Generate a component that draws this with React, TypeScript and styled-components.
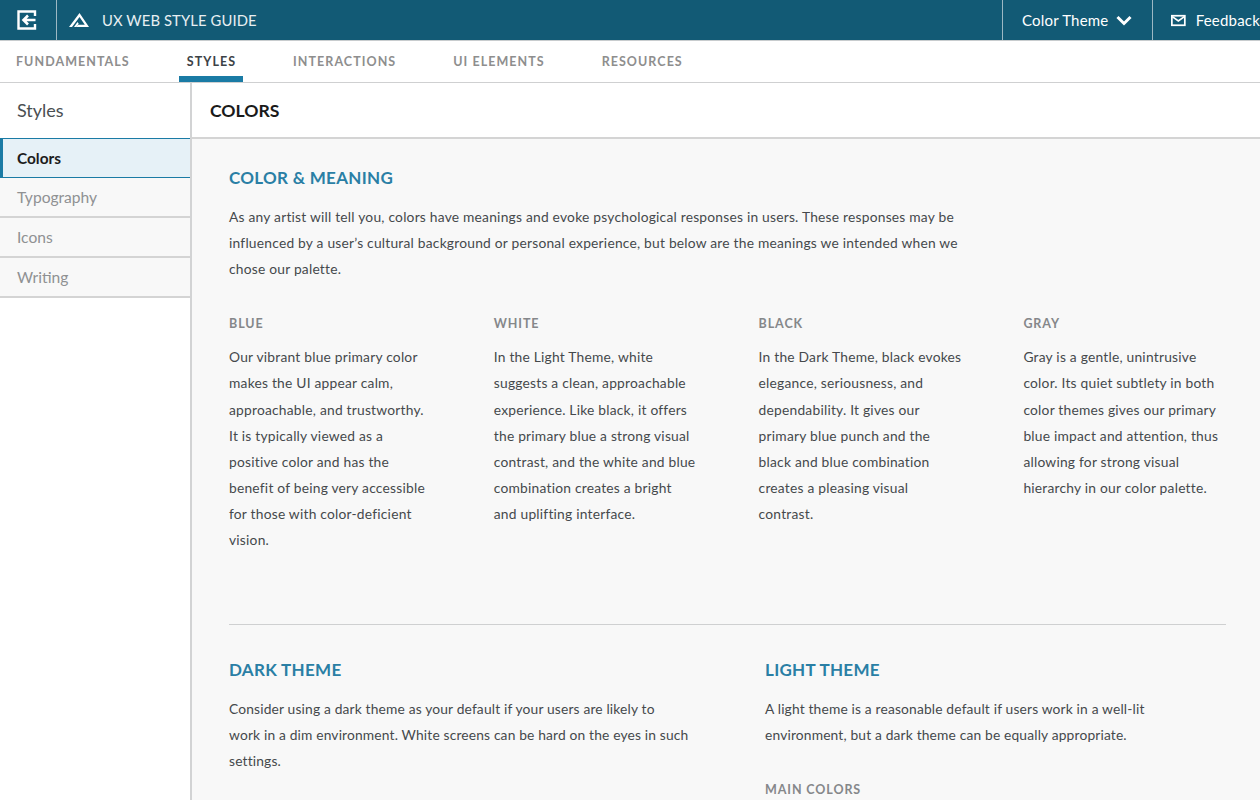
import React, { FC } from 'react';
import styled, { createGlobalStyle } from 'styled-components';

const GlobalStyle = createGlobalStyle`
  html, body {
    margin: 0;
    height: 100%;
    overflow: hidden;
    background: #fff;
    font-family: 'Lato', 'Open Sans', sans-serif;
  }
  * { box-sizing: border-box; }
`;

const Page = styled.div`
  width: 1260px;
  height: 800px;
  overflow: hidden;
  display: flex;
  flex-direction: column;
`;

const TopBar = styled.header`
  flex: none;
  height: 41px;
  display: flex;
  background: #125a75;
  color: #fff;
  border-bottom: 1px solid #c8ccce;
`;

const BackButton = styled.div`
  width: 57px;
  display: flex;
  align-items: center;
  justify-content: center;
  padding-right: 2px;
  border-right: 1px solid #9db8c4;
`;

const Brand = styled.div`
  flex: 1;
  display: flex;
  align-items: center;
  gap: 13px;
  padding-left: 12px;
  font-size: 14.8px;
  letter-spacing: 0.1px;
  color: #e8eff2;
`;

const BarAction = styled.div<{ $width: number; $gap: number; $pad: number }>`
  flex: none;
  width: ${p => p.$width}px;
  display: flex;
  align-items: center;
  gap: ${p => p.$gap}px;
  padding-left: ${p => p.$pad}px;
  border-left: 1px solid #9db8c4;
  font-size: 15px;
  letter-spacing: 0.2px;
  white-space: nowrap;
  overflow: hidden;
`;

const Tabs = styled.nav`
  flex: none;
  height: 42px;
  display: flex;
  gap: 57px;
  padding-left: 16px;
  border-bottom: 1px solid #cfd0d1;
`;

const Tab = styled.div<{ $active?: boolean }>`
  position: relative;
  height: 41px;
  display: flex;
  align-items: center;
  padding-bottom: 1px;
  font-size: 12.5px;
  font-weight: 700;
  letter-spacing: 1.05px;
  color: ${p => (p.$active ? '#3c4246' : '#8e8e8e')};

  ${p =>
    p.$active &&
    `
    &::after {
      content: '';
      position: absolute;
      left: -8px;
      right: -7px;
      bottom: 0;
      height: 6px;
      background: #1a7ba5;
    }
  `}
`;

const Body = styled.div`
  flex: 1;
  min-height: 0;
  display: flex;
`;

const Sidebar = styled.aside`
  flex: none;
  width: 192px;
  border-right: 2px solid #d2d3d4;
`;

const SidebarTitle = styled.div`
  height: 55px;
  display: flex;
  align-items: center;
  padding: 0 0 2px 17px;
  font-size: 18px;
  color: #4a4f52;
`;

const SideItem = styled.div<{ $active?: boolean }>`
  height: 40px;
  display: flex;
  align-items: center;
  padding-left: ${p => (p.$active ? '14px' : '17px')};
  padding-bottom: 1px;
  font-size: ${p => (p.$active ? '15.4px' : '15.6px')};
  background: ${p => (p.$active ? '#e6f1f7' : '#f8f8f8')};
  color: ${p => (p.$active ? '#1c1c1c' : '#8f9193')};
  font-weight: ${p => (p.$active ? 700 : 400)};
  border-bottom: ${p => (p.$active ? '1px solid #1a7ba5' : '2px solid #d4d4d4')};
  ${p => p.$active && 'border-left: 3px solid #1a7ba5; border-top: 1px solid #1a7ba5;'}
`;

const Main = styled.main`
  flex: 1;
  min-width: 0;
  display: flex;
  flex-direction: column;
`;

const PageTitle = styled.h1`
  flex: none;
  height: 56px;
  margin: 0;
  display: flex;
  align-items: center;
  padding-left: 18px;
  font-size: 17.6px;
  font-weight: 700;
  color: #1a1a1a;
  border-bottom: 2px solid #d4d4d4;
`;

const Content = styled.div`
  flex: 1;
  background: #f8f8f8;
  padding: 26px 34px 0 37px;
  overflow: hidden;
`;

const SectionTitle = styled.h2`
  margin: 0 0 13px;
  font-size: 17px;
  line-height: 26px;
  font-weight: 700;
  letter-spacing: 0.3px;
  color: #2a7fa5;
`;

const Copy = styled.p<{ $tight?: boolean }>`
  margin: 0;
  font-size: 13.8px;
  line-height: 26.1px;
  letter-spacing: ${p => (p.$tight ? '0.16px' : '0.22px')};
  color: #45494c;
  white-space: nowrap;
`;

const Columns = styled.div`
  margin-top: 29px;
  display: grid;
  grid-template-columns: repeat(4, 264.8px);
`;

const SubHead = styled.h3`
  margin: 0 0 7.1px;
  font-size: 12.5px;
  line-height: 26px;
  font-weight: 700;
  letter-spacing: 0.9px;
  color: #85878a;
`;

const Divider = styled.hr`
  margin: 70.8px 0 0;
  border: 0;
  border-top: 1px solid #cfd0d1;
`;

const Themes = styled.div`
  margin-top: 32px;
  display: grid;
  grid-template-columns: 536px 1fr;
`;

const SpacedHead = styled(SubHead)`
  margin: 29px 0 0;
`;

const BackIcon: FC = () => (
  <svg width="20" height="20" viewBox="0 0 20 20" fill="none" stroke="#fff">
    <path d="M18 6V1.5H1.5v17H18V14" strokeWidth="2.4" />
    <path d="M18.5 10H7M11 5.5 6.5 10l4.500 4.500" strokeWidth="2.6" />
  </svg>
);

const LogoIcon: FC = () => (
  <svg width="20" height="14" viewBox="0 0 20 14" fill="#fff">
    <path d="M10.500 0 20 14H7.500l1.500-2.200h6.800L10.500 4 3 14H0z" />
    <path d="M5 14l3.500-5 1.200 1.700L7.500 14z" />
  </svg>
);

const ChevronIcon: FC = () => (
  <svg width="16" height="12" viewBox="0 0 16 12" fill="none" stroke="#fff" strokeWidth="3">
    <path d="M1.500 3 8 9.500 14.500 3" />
  </svg>
);

const MailIcon: FC = () => (
  <svg width="17" height="13" viewBox="0 0 17 13" fill="none" stroke="#fff" strokeWidth="2">
    <rect x="1" y="1" width="15" height="11" />
    <path d="M1.500 2 8.500 7l7-5" />
  </svg>
);

const tabs = ['FUNDAMENTALS', 'STYLES', 'INTERACTIONS', 'UI ELEMENTS', 'RESOURCES'];

const palette = [
  {
    name: 'BLUE',
    lines: [
      'Our vibrant blue primary color',
      'makes the UI appear calm,',
      'approachable, and trustworthy.',
      'It is typically viewed as a',
      'positive color and has the',
      'benefit of being very accessible',
      'for those with color-deficient',
      'vision.',
    ],
  },
  {
    name: 'WHITE',
    lines: [
      'In the Light Theme, white',
      'suggests a clean, approachable',
      'experience. Like black, it offers',
      'the primary blue a strong visual',
      'contrast, and the white and blue',
      'combination creates a bright',
      'and uplifting interface.',
    ],
  },
  {
    name: 'BLACK',
    lines: [
      'In the Dark Theme, black evokes',
      'elegance, seriousness, and',
      'dependability. It gives our',
      'primary blue punch and the',
      'black and blue combination',
      'creates a pleasing visual',
      'contrast.',
    ],
  },
  {
    name: 'GRAY',
    lines: [
      'Gray is a gentle, unintrusive',
      'color. Its quiet subtlety in both',
      'color themes gives our primary',
      'blue impact and attention, thus',
      'allowing for strong visual',
      'hierarchy in our color palette.',
    ],
  },
];

const Lines: FC<{ lines: string[]; tight?: boolean }> = ({ lines, tight }) => (
  <Copy $tight={tight}>
    {lines.map((line, i) => (
      <React.Fragment key={i}>
        {line}
        {i < lines.length - 1 && <br />}
      </React.Fragment>
    ))}
  </Copy>
);

const App: FC = () => (
  <Page>
    <GlobalStyle />
    <TopBar>
      <BackButton>
        <BackIcon />
      </BackButton>
      <Brand>
        <LogoIcon />
        UX WEB STYLE GUIDE
      </Brand>
      <BarAction $width={150} $gap={8} $pad={19}>
        Color Theme
        <ChevronIcon />
      </BarAction>
      <BarAction $width={108} $gap={10} $pad={18}>
        <MailIcon />
        Feedback
      </BarAction>
    </TopBar>
    <Tabs>
      {tabs.map(tab => (
        <Tab key={tab} $active={tab === 'STYLES'}>
          {tab}
        </Tab>
      ))}
    </Tabs>
    <Body>
      <Sidebar>
        <SidebarTitle>Styles</SidebarTitle>
        <SideItem $active>Colors</SideItem>
        <SideItem>Typography</SideItem>
        <SideItem>Icons</SideItem>
        <SideItem>Writing</SideItem>
      </Sidebar>
      <Main>
        <PageTitle>COLORS</PageTitle>
        <Content>
          <SectionTitle>COLOR &amp; MEANING</SectionTitle>
          <Lines
            lines={[
              'As any artist will tell you, colors have meanings and evoke psychological responses in users. These responses may be',
              'influenced by a user\u2019s cultural background or personal experience, but below are the meanings we intended when we',
              'chose our palette.',
            ]}
          />
          <Columns>
            {palette.map(col => (
              <div key={col.name}>
                <SubHead>{col.name}</SubHead>
                <Lines lines={col.lines} />
              </div>
            ))}
          </Columns>
          <Divider />
          <Themes>
            <div>
              <SectionTitle>DARK THEME</SectionTitle>
              <Lines
                tight
                lines={[
                  'Consider using a dark theme as your default if your users are likely to',
                  'work in a dim environment. White screens can be hard on the eyes in such',
                  'settings.',
                ]}
              />
            </div>
            <div>
              <SectionTitle>LIGHT THEME</SectionTitle>
              <Lines
                tight
                lines={[
                  'A light theme is a reasonable default if users work in a well-lit',
                  'environment, but a dark theme can be equally appropriate.',
                ]}
              />
              <SpacedHead>MAIN COLORS</SpacedHead>
            </div>
          </Themes>
        </Content>
      </Main>
    </Body>
  </Page>
);

export default App;
